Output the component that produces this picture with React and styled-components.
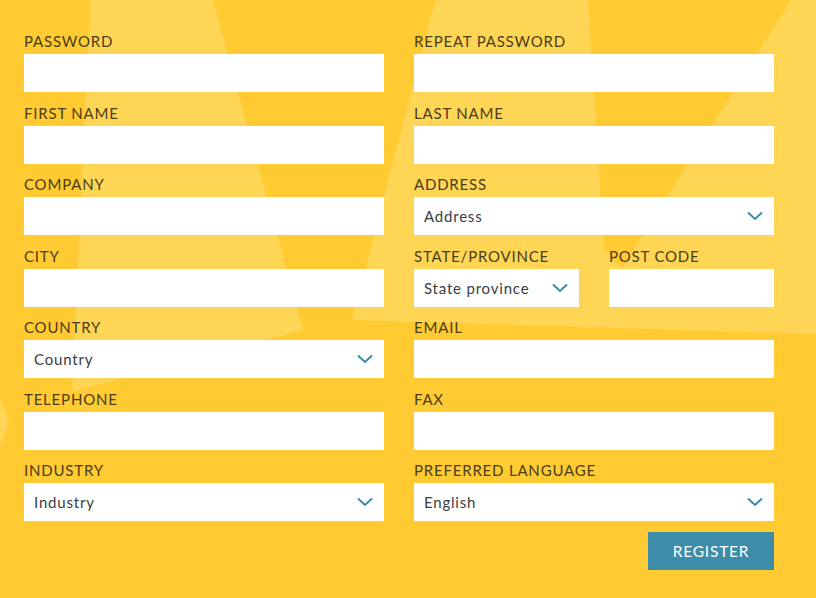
import React from 'react';
import styled, { createGlobalStyle } from 'styled-components';

const GlobalStyle = createGlobalStyle`
  html, body {
    margin: 0;
    padding: 0;
    background: #ffca32;
  }
  body {
    font-family: Lato, "Open Sans", sans-serif;
  }
`;

const Page = styled.div`
  position: relative;
  width: 816px;
  height: 598px;
  overflow: hidden;
  background: #ffca32;
`;

const Backdrop = styled.svg`
  position: absolute;
  inset: 0;
  width: 816px;
  height: 598px;
`;

const Form = styled.form`
  position: relative;
  display: grid;
  grid-template-columns: 360px 360px;
  column-gap: 30px;
  row-gap: 10.5px;
  padding: 31px 0 0 24px;
`;

const Field = styled.div`
  display: flex;
  flex-direction: column;
`;

const Pair = styled.div`
  display: grid;
  grid-template-columns: 165px 165px;
  column-gap: 30px;
`;

const Label = styled.label`
  height: 20px;
  margin-bottom: 3px;
  font-size: 15px;
  line-height: 20px;
  letter-spacing: 0.8px;
  color: #4b3d18;
  text-transform: uppercase;
  white-space: nowrap;
`;

const Input = styled.input`
  box-sizing: border-box;
  width: 100%;
  height: 38px;
  margin: 0;
  padding: 0 10px;
  border: none;
  outline: none;
  background: #ffffff;
  font: inherit;
  font-size: 15px;
  color: #3a3d42;
`;

const SelectBox = styled.div`
  box-sizing: border-box;
  display: flex;
  align-items: center;
  justify-content: space-between;
  height: 38px;
  padding: 0 11px 0 10px;
  background: #ffffff;
  font-size: 15px;
  letter-spacing: 0.8px;
  color: #3a3d42;
`;

const Actions = styled.div`
  grid-column: 2;
  display: flex;
  justify-content: flex-end;
`;

const Button = styled.button`
  width: 126px;
  height: 38px;
  padding: 0;
  border: none;
  background: #3d8ca8;
  color: #ffffff;
  font: inherit;
  font-size: 15.5px;
  letter-spacing: 0.8px;
  text-transform: uppercase;
  cursor: pointer;
`;

const Chevron = () => (
  <svg width="16" height="10" viewBox="0 0 16 10">
    <path d="M1 1.5 L8 8 L15 1.5" fill="none" stroke="#3d8aa5" strokeWidth="2" />
  </svg>
);

const TextField = ({ label, type = 'text' }) => (
  <Field>
    <Label>{label}</Label>
    <Input type={type} />
  </Field>
);

const SelectField = ({ label, value }) => (
  <Field>
    <Label>{label}</Label>
    <SelectBox>
      <span>{value}</span>
      <Chevron />
    </SelectBox>
  </Field>
);

export default function App() {
  return (
    <Page>
      <GlobalStyle />
      <Backdrop viewBox="0 0 816 598">
        <g fill="#ffd555">
          <polygon points="90,0 213,0 303,330 72,392" />
          <polygon points="435,0 816,0 816,334 352,320" />
          <polygon points="0,398 9,422 0,446" />
        </g>
        <polygon points="588,0 791,0 622,268 604,250" fill="#ffca32" />
      </Backdrop>
      <Form onSubmit={(e) => e.preventDefault()}>
        <TextField label="Password" type="password" />
        <TextField label="Repeat password" type="password" />
        <TextField label="First name" />
        <TextField label="Last name" />
        <TextField label="Company" />
        <SelectField label="Address" value="Address" />
        <TextField label="City" />
        <Pair>
          <SelectField label="State/Province" value="State province" />
          <TextField label="Post code" />
        </Pair>
        <SelectField label="Country" value="Country" />
        <TextField label="Email" type="email" />
        <TextField label="Telephone" />
        <TextField label="Fax" />
        <SelectField label="Industry" value="Industry" />
        <SelectField label="Preferred language" value="English" />
        <Actions>
          <Button type="submit">Register</Button>
        </Actions>
      </Form>
    </Page>
  );
}
